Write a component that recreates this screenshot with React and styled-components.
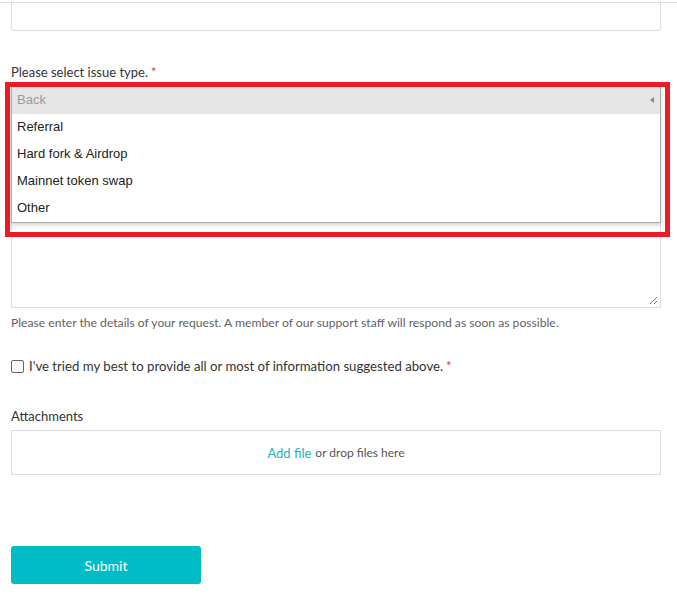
import styled, { createGlobalStyle } from "styled-components";

const GlobalStyle = createGlobalStyle`
  * { box-sizing: border-box; }
  html, body {
    margin: 0;
    padding: 0;
    background: #fff;
    overflow: hidden;
  }
  body {
    font-family: "Lato", "Liberation Sans", sans-serif;
    color: #333;
  }
`;

const Page = styled.div`
  width: 677px;
  height: 595px;
`;

const TopStrip = styled.div`
  height: 3px;
  border-bottom: 1px solid #e0e0e0;
`;

const Form = styled.form`
  display: flex;
  flex-direction: column;
  padding: 0 16px 0 11px;
`;

const CutInput = styled.div`
  height: 28px;
  border: 1px solid #ddd;
  border-top: none;
  border-radius: 0 0 4px 4px;
`;

const Label = styled.label`
  display: block;
  margin-top: ${(p) => p.$top || 0}px;
  font-size: 13px;
  line-height: 18px;
  color: #333;
`;

const Required = styled.span`
  color: #e53935;
  margin-left: 3px;
`;

const Field = styled.div`
  position: relative;
  margin-top: 6px;
  display: flex;
  flex-direction: column;
`;

const SelectBox = styled.div`
  height: 34px;
  border: 1px solid #ddd;
  border-radius: 4px;
`;

const TextArea = styled.div`
  position: relative;
  margin-top: 20px;
  height: 167px;
  border: 1px solid #ddd;
`;

const Grip = styled.svg`
  position: absolute;
  right: 2px;
  bottom: 2px;
`;

const HighlightFrame = styled.div`
  position: absolute;
  top: -5px;
  left: -6px;
  width: 665px;
  height: 155px;
  border: 5px solid #ed1c24;
  padding-left: 1px;
`;

const OptionList = styled.ul`
  list-style: none;
  margin: 0;
  padding: 0;
  width: 650px;
  background: #fff;
  border: 1px solid #aaa;
  border-top: none;
  box-shadow: 0 2px 4px rgba(0, 0, 0, 0.18);
  font-family: "Liberation Sans", Arial, sans-serif;
  font-size: 13px;
`;

const Option = styled.li`
  display: flex;
  align-items: center;
  justify-content: space-between;
  height: 27px;
  padding: 0 6px 2px 5px;
  color: ${(p) => (p.$back ? "#9a9a9a" : "#222")};
  background: ${(p) => (p.$back ? "#e6e6e6" : "#fff")};
`;

const BackArrow = styled.span`
  width: 0;
  height: 0;
  border-top: 3px solid transparent;
  border-bottom: 3px solid transparent;
  border-right: 4px solid #8a8a8a;
`;

const Help = styled.p`
  margin: 7px 0 0;
  font-size: 12.15px;
  line-height: 16px;
  color: #5f5f5f;
`;

const CheckRow = styled.label`
  display: flex;
  align-items: center;
  gap: 5px;
  margin-top: 25px;
  height: 20px;
  font-size: 13.2px;
  color: #333;
`;

const CheckBox = styled.span`
  width: 13px;
  height: 13px;
  border: 1px solid #666;
  border-radius: 2px;
  background: #fff;
  flex: none;
`;

const DropZone = styled.div`
  margin-top: 5px;
  height: 45px;
  border: 1px solid #ddd;
  display: flex;
  align-items: center;
  justify-content: center;
  font-size: 12px;
  color: #555;
`;

const AddLink = styled.a`
  color: #1db3c0;
  font-size: 13px;
  margin-right: 4px;
  text-decoration: none;
`;

const SubmitButton = styled.button`
  margin-top: 71px;
  width: 190px;
  height: 38px;
  border: none;
  border-radius: 3px;
  background: #00bcc6;
  color: #fff;
  font-family: "Lato", "Liberation Sans", sans-serif;
  font-size: 14px;
`;

const options = ["Referral", "Hard fork & Airdrop", "Mainnet token swap", "Other"];

export default function App() {
  return (
    <Page>
      <GlobalStyle />
      <TopStrip />
      <Form>
        <CutInput />
        <Label $top={32}>
          Please select issue type.<Required>*</Required>
        </Label>
        <Field>
          <SelectBox />
          <TextArea>
            <Grip width="9" height="9" viewBox="0 0 9 9">
              <path d="M8 1L1 8M8 5L5 8" stroke="#777" strokeWidth="1" />
            </Grip>
          </TextArea>
          <HighlightFrame>
            <OptionList>
              <Option $back>
                Back
                <BackArrow />
              </Option>
              {options.map((o) => (
                <Option key={o}>{o}</Option>
              ))}
            </OptionList>
          </HighlightFrame>
        </Field>
        <Help>
          Please enter the details of your request. A member of our support staff will respond as
          soon as possible.
        </Help>
        <CheckRow>
          <CheckBox />
          <span>
            I've tried my best to provide all or most of information suggested above.
            <Required>*</Required>
          </span>
        </CheckRow>
        <Label $top={31}>Attachments</Label>
        <DropZone>
          <AddLink href="#">Add file</AddLink> or drop files here
        </DropZone>
        <div>
          <SubmitButton type="button">Submit</SubmitButton>
        </div>
      </Form>
    </Page>
  );
}
